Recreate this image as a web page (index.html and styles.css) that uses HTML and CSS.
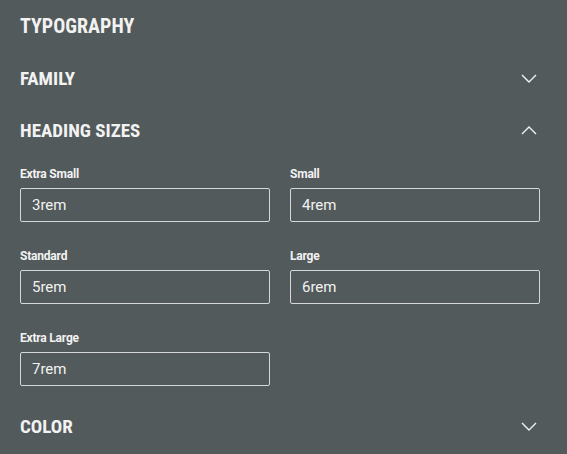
FILE: index.html
```html
<!DOCTYPE html>
<html>
<head>
<meta charset="utf-8">
<link rel="stylesheet" href="styles.css">
</head>
<body>
<div class="panel">
  <div class="title">TYPOGRAPHY</div>
  <div class="section">
    <div class="section-head">
      <span>FAMILY</span>
      <svg class="chev" width="16" height="9" viewBox="0 0 16 9"><path d="M1 1 L8 8 L15 1" fill="none" stroke="#f2f2f2" stroke-width="1.4"/></svg>
    </div>
  </div>
  <div class="section">
    <div class="section-head">
      <span>HEADING SIZES</span>
      <svg class="chev" width="16" height="9" viewBox="0 0 16 9"><path d="M1 8 L8 1 L15 8" fill="none" stroke="#f2f2f2" stroke-width="1.4"/></svg>
    </div>
    <div class="fields">
      <label class="field"><span class="label">Extra Small</span><input class="input" value="3rem"></label>
      <label class="field"><span class="label">Small</span><input class="input" value="4rem"></label>
      <label class="field"><span class="label">Standard</span><input class="input" value="5rem"></label>
      <label class="field"><span class="label">Large</span><input class="input" value="6rem"></label>
      <label class="field"><span class="label">Extra Large</span><input class="input" value="7rem"></label>
    </div>
  </div>
  <div class="section">
    <div class="section-head">
      <span>COLOR</span>
      <svg class="chev" width="16" height="9" viewBox="0 0 16 9"><path d="M1 1 L8 8 L15 1" fill="none" stroke="#f2f2f2" stroke-width="1.4"/></svg>
    </div>
  </div>
</div>
</body>
</html>
```
FILE: styles.css
```css
html, body {
  margin: 0;
  padding: 0;
  background: #525a5b;
}
body {
  font-family: Roboto, "Liberation Sans", sans-serif;
  color: #f2f2f2;
}
.panel {
  padding: 0 27px 0 20px;
}
.title, .section-head {
  height: 52px;
  display: flex;
  align-items: center;
  justify-content: space-between;
  font-size: 19px;
  font-weight: 700;
  font-stretch: 87.5%;
}
.title {
  font-size: 20px;
}
.chev {
  margin-right: 3px;
  display: block;
}
.fields {
  display: grid;
  grid-template-columns: 1fr 1fr;
  column-gap: 20px;
  row-gap: 27px;
  padding: 11px 0 14px;
}
.field {
  display: flex;
  flex-direction: column;
  gap: 7px;
}
.label {
  font-size: 12px;
  line-height: 14px;
  font-weight: 700;
  letter-spacing: -0.2px;
}
.input {
  box-sizing: border-box;
  height: 34px;
  width: 100%;
  margin: 0;
  padding: 0 11px;
  background: transparent;
  border: 1px solid #d6d8d8;
  border-radius: 2px;
  color: #f2f2f2;
  font-family: Roboto, "Liberation Sans", sans-serif;
  font-size: 15px;
  outline: none;
}
```
